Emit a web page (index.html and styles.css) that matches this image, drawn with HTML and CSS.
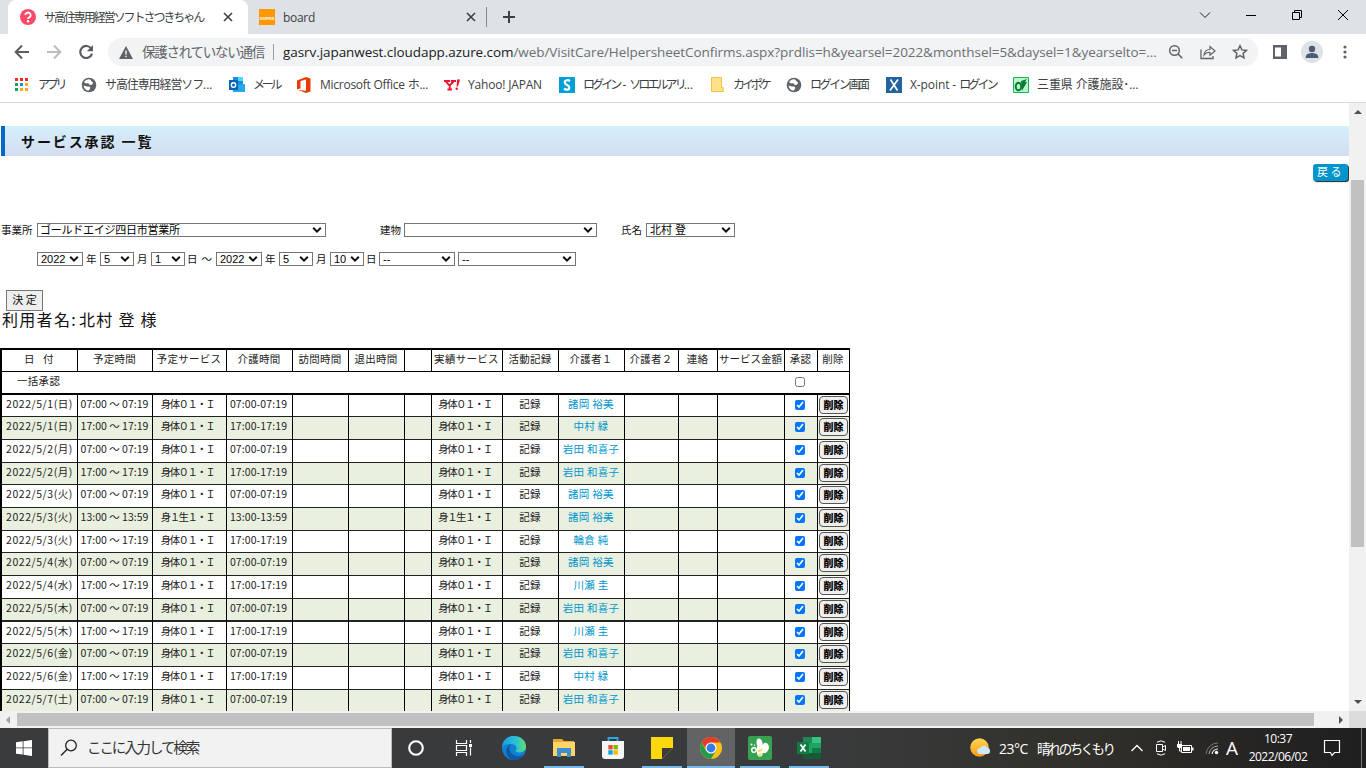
FILE: index.html
```html
<!DOCTYPE html>
<html lang="ja">
<head>
<meta charset="utf-8">
<title>サ高住専用経営ソフトさつきちゃん</title>
<link rel="stylesheet" href="styles.css">
</head>
<body>
<svg class="defs" width="0" height="0">
  <symbol id="chev" viewBox="0 0 10 8"><path d="M1.2 1.8 5 5.6 8.8 1.8" fill="none" stroke="#111" stroke-width="2"/></symbol>
  <symbol id="globe" viewBox="0 0 16 16"><circle cx="8" cy="8" r="7.3" fill="#5f6368"/><path d="M8.5 2.2C6.5 2 4 3.2 3 5.2l2.3 1.3 1.8-.4L8.8 8l2.2-.2 1.2-2.3-1.6-.9-1-1.6zM2.6 8.4l3.2 1.2 2.4-.2 1.2 1.4-1.4 2.8C5.200 13.800 2.800 11.200 2.600 8.400z" fill="#fff"/></symbol>
  <symbol id="x" viewBox="0 0 10 10"><path d="M1 1l8 8M9 1l-8 8" stroke="#3c4043" stroke-width="1.6"/></symbol>
</svg>
<header class="tabs">
  <div class="tab active">
    <svg width="16" height="16" viewBox="0 0 16 16"><circle cx="8" cy="8" r="8" fill="#fb4a68"/><path d="M5.300 6.100a2.700 2.500 0 1 1 4.300 2c-1.100.8-1.600 1-1.600 1.800" fill="none" stroke="#fff" stroke-width="1.900"/><circle cx="8" cy="12.300" r="1.200" fill="#fff"/></svg>
    <span class="tab-title jp1">サ高住専用経営ソフトさつきちゃん</span>
    <svg class="close" width="10" height="10"><use href="#x"/></svg>
  </div>
  <div class="tab second">
    <span class="norma">norma</span>
    <span class="tab-title board">board</span>
    <svg class="close" width="10" height="10"><use href="#x"/></svg>
  </div>
  <svg class="plus" width="12" height="12" viewBox="0 0 12 12"><path d="M6 0v12M0 6h12" stroke="#3c4043" stroke-width="2"/></svg>
  <div class="winbtns">
    <svg width="12" height="12" viewBox="0 0 12 12"><path d="M1 3.500l5 5 5-5" fill="none" stroke="#222"/></svg>
    <svg width="12" height="12" viewBox="0 0 12 12"><path d="M1 6.500h10" stroke="#000"/></svg>
    <svg width="12" height="12" viewBox="0 0 12 12"><path d="M1.500 3.500h7v7h-7zM3.500 3.500v-2h7v7h-2" fill="none" stroke="#000"/></svg>
    <svg width="12" height="12" viewBox="0 0 12 12"><path d="M1 1l10 10M11 1L1 11" stroke="#000"/></svg>
  </div>
</header>
<nav class="toolbar">
  <svg class="nav-ic" width="16" height="16" viewBox="0 0 16 16"><path d="M15 8H2M8 1.500L1.700 8 8 14.500" fill="none" stroke="#5a5d61" stroke-width="2"/></svg>
  <svg class="nav-ic" width="16" height="16" viewBox="0 0 16 16"><path d="M1 8h13M8 1.500L14.300 8 8 14.500" fill="none" stroke="#babcbe" stroke-width="2"/></svg>
  <svg class="nav-ic" width="16" height="16" viewBox="0 0 16 16"><path d="M13.200 4.600A6 6 0 1 0 14 9.600" fill="none" stroke="#5a5d61" stroke-width="2.200"/><path d="M15 1v6.200H8.800z" fill="#5a5d61"/></svg>
  <div class="omni">
    <svg class="warn" width="14" height="13" viewBox="0 0 14 13"><path d="M7 0l7 13H0z" fill="#5f6368"/><path d="M7 4.500v4M7 9.800v1.500" stroke="#f1f3f4" stroke-width="1.500"/></svg>
    <span class="insecure">保護されていない通信</span><i class="sep"></i>
    <span class="url"><b>gasrv.japanwest.cloudapp.azure.com</b>/web/VisitCare/HelpersheetConfirms.aspx?prdlis=h&amp;yearsel=2022&amp;monthsel=5&amp;daysel=1&amp;yearselto=...</span>
    <svg class="oic" width="16" height="16" viewBox="0 0 16 16"><circle cx="6.500" cy="6.500" r="4.800" fill="none" stroke="#5f6368" stroke-width="1.500"/><path d="M4 6.500h5M10 10l4.300 4.300" stroke="#5f6368" stroke-width="1.600"/></svg>
    <svg class="oic" width="16" height="16" viewBox="0 0 16 16"><path d="M1 5.500v9h12V12" fill="none" stroke="#5f6368" stroke-width="1.300"/><path d="M4 11c.5-4 3-5.500 6-5.500V2.500L15 7l-5 4.300V8.500C7.500 8.300 5.500 9 4 11z" fill="none" stroke="#5f6368" stroke-width="1.200"/></svg>
    <svg class="oic" width="16" height="16" viewBox="0 0 16 16"><path d="M8 1.800l1.900 4.100 4.500.5-3.300 3 .9 4.400L8 11.600l-4 2.200.9-4.400-3.300-3 4.500-.5z" fill="none" stroke="#5f6368" stroke-width="1.500"/></svg>
  </div>
  <svg class="panel" width="14" height="14" viewBox="0 0 14 14"><path d="M0 0h14v14H0z" fill="#5f6368"/><path d="M2 2.500h6v9H2z" fill="#fff"/></svg>
  <svg class="avatar" width="22" height="22" viewBox="0 0 22 22"><circle cx="11" cy="11" r="11" fill="#dee1e6"/><circle cx="11" cy="8" r="3.200" fill="#4c5c78"/><path d="M4.800 17v-1.500c0-2.500 4-3.500 6.200-3.500s6.200 1 6.200 3.500V17z" fill="#4c5c78"/></svg>
  <svg class="dots" width="4" height="14" viewBox="0 0 4 14"><g fill="#5f6368"><circle cx="2" cy="2" r="1.600"/><circle cx="2" cy="7" r="1.600"/><circle cx="2" cy="12" r="1.600"/></g></svg>
</nav>
<nav class="marks">
  <div class="mk m1"><svg width="14" height="14" viewBox="0 0 14 14"><path d="M0 0h3v3H0zM5 0h3v3H5zM10 0h3v3h-3z" fill="#f02a1d"/><path d="M0 5h3v3H0z" fill="#12a05c"/><path d="M5 5h3v3H5z" fill="#1a8cff"/><path d="M10 5h3v3h-3zM10 10h3v3h-3zM5 10h3v3H5z" fill="#f8a91c"/><path d="M0 10h3v3H0z" fill="#12a05c"/></svg><span>アプリ</span></div>
  <div class="mk m2"><svg width="16" height="16"><use href="#globe"/></svg><span>サ高住専用経営ソフ<em>...</em></span></div>
  <div class="mk m3"><svg width="16" height="16" viewBox="0 0 16 16"><path d="M4 0h10v8H4z" fill="#1490df"/><path d="M9 0h5v4H9z" fill="#50d9ff"/><path d="M3 8l13-1v8H4z" fill="#28a8ea"/><path d="M0 3h9v10H0z" fill="#0364b8"/><circle cx="4.500" cy="8" r="2.200" fill="none" stroke="#fff" stroke-width="1.400"/></svg><span>メール</span></div>
  <div class="mk m4"><svg width="14" height="16" viewBox="0 0 14 16"><path d="M0 3.500L9 0l4.500 1.500v13L9 16 1 13l8 .8V2.600L3.500 4v7.200L0 12.500z" fill="#eb3c00"/></svg><span>Microsoft Office ホ...</span></div>
  <div class="mk m5"><svg width="16" height="14" viewBox="0 0 16 14"><path d="M0 3h6M6.800 3H12M1.500 3l4 4.700L10 3M5.700 7.500v4M3.500 11.500h4.500" fill="none" stroke="#f0132d" stroke-width="1.900"/><path d="M13 1.500h3L14 8.500h-1.400z" fill="#f0132d"/><circle cx="12.700" cy="10.800" r="1.200" fill="#f0132d"/></svg><span>Yahoo! JAPAN</span></div>
  <div class="mk m6"><svg width="16" height="16" viewBox="0 0 16 16"><path d="M0 0h16v16H0z" fill="#009fd6"/><path d="M11 4.200C9 2.500 5.800 3 5.800 5.400c0 2.800 4.500 2.200 4.500 5 0 2.600-3.400 2.800-5.300 1.300" fill="none" stroke="#fff" stroke-width="2.200"/></svg><span>ログイン<em> - </em>ソロエルアリ<em>...</em></span></div>
  <div class="mk m7"><svg width="13" height="15" viewBox="0 0 13 15"><path d="M.5.500h10v10h1.700v4H.5z" fill="#ffe28a" stroke="#f2c240"/></svg><span>カイポケ</span></div>
  <div class="mk m8"><svg width="16" height="16"><use href="#globe"/></svg><span>ログイン画面</span></div>
  <div class="mk m9"><svg width="16" height="16" viewBox="0 0 16 16"><path d="M0 0h16v16H0z" fill="#25639f"/><path d="M4.500 2.500l7 11M12 2.500l-8 11" stroke="#fff" stroke-width="1.700"/></svg><span><em>X-point - </em>ログイン</span></div>
  <div class="mk m10"><svg width="16" height="16" viewBox="0 0 16 16"><path d="M.5.500h15v15H.5z" fill="#b9f7ca" stroke="#12b458"/><ellipse cx="5.500" cy="9.500" rx="2.800" ry="3.800" fill="none" stroke="#087b38" stroke-width="2"/><path d="M8 4l6-2-2 3 2 0-4 7-1 2z" fill="#087b38"/></svg><span>三重県 介護施設･...</span></div>
</nav>
<main class="view">
  <section class="page">
    <h1>サービス承認 一覧</h1>
    <div class="backrow"><a class="back">戻 る</a></div>
    <div class="filter f1">
      <label class="w36">事業所</label><div class="sel s289"><span class="office">ゴールドエイジ四日市営業所</span><svg width="10" height="8"><use href="#chev"/></svg></div>
      <label class="bld">建物</label><div class="sel s193"><span></span><svg width="10" height="8"><use href="#chev"/></svg></div>
      <label class="nm">氏名</label><div class="sel s89"><span class="kita">北村 登</span><svg width="10" height="8"><use href="#chev"/></svg></div>
    </div>
    <div class="filter f2">
      <div class="sel s46"><span>2022</span><svg width="10" height="8"><use href="#chev"/></svg></div><label class="w17">年</label>
      <div class="sel s34"><span>5</span><svg width="10" height="8"><use href="#chev"/></svg></div><label class="w17">月</label>
      <div class="sel s34"><span>1</span><svg width="10" height="8"><use href="#chev"/></svg></div><label class="w31">日 ～</label>
      <div class="sel s46"><span>2022</span><svg width="10" height="8"><use href="#chev"/></svg></div><label class="w17">年</label>
      <div class="sel s34"><span>5</span><svg width="10" height="8"><use href="#chev"/></svg></div><label class="w17">月</label>
      <div class="sel s34"><span>10</span><svg width="10" height="8"><use href="#chev"/></svg></div><label class="w15">日</label>
      <div class="sel s76"><span>--</span><svg width="10" height="8"><use href="#chev"/></svg></div>
      <div class="sel s118"><span>--</span><svg width="10" height="8"><use href="#chev"/></svg></div>
    </div>
    <button class="decide">決 定</button>
    <p class="user"><span>利用者名:</span><span>北村 登 様</span></p>
    <table>
      <colgroup><col class="c76"><col class="c75"><col class="c74"><col class="c66"><col class="c56"><col class="c56"><col class="c27"><col class="c71"><col class="c56"><col class="c66"><col class="c54"><col class="c39"><col class="c67"><col class="c33"><col class="c32"></colgroup>
      <thead>
        <tr><th>日&ensp; 付</th><th>予定時間</th><th>予定サービス</th><th>介護時間</th><th>訪問時間</th><th>退出時間</th><th></th><th>実績サービス</th><th>活動記録</th><th>介護者１</th><th>介護者２</th><th>連絡</th><th class="money">サービス金額</th><th>承認</th><th>削除</th></tr>
        <tr class="bulk"><td colspan="13">一括承認</td><td class="ck"><input type="checkbox"></td><td></td></tr>
      </thead>
      <tbody>
        <tr class="short"><td class="d">2022/5/1(日)</td><td class="t">07:00 ～ 07:19</td><td>身体０１・Ｉ</td><td class="r">07:00-07:19</td><td></td><td></td><td></td><td>身体０１・Ｉ</td><td>記録</td><td><a>諸岡 裕美</a></td><td></td><td></td><td></td><td class="ck"><input type="checkbox" checked></td><td><button>削除</button></td></tr>
        <tr><td class="d">2022/5/1(日)</td><td class="t">17:00 ～ 17:19</td><td>身体０１・Ｉ</td><td class="r">17:00-17:19</td><td></td><td></td><td></td><td>身体０１・Ｉ</td><td>記録</td><td><a>中村 緑</a></td><td></td><td></td><td></td><td class="ck"><input type="checkbox" checked></td><td><button>削除</button></td></tr>
        <tr><td class="d">2022/5/2(月)</td><td class="t">07:00 ～ 07:19</td><td>身体０１・Ｉ</td><td class="r">07:00-07:19</td><td></td><td></td><td></td><td>身体０１・Ｉ</td><td>記録</td><td><a>岩田 和喜子</a></td><td></td><td></td><td></td><td class="ck"><input type="checkbox" checked></td><td><button>削除</button></td></tr>
        <tr class="short"><td class="d">2022/5/2(月)</td><td class="t">17:00 ～ 17:19</td><td>身体０１・Ｉ</td><td class="r">17:00-17:19</td><td></td><td></td><td></td><td>身体０１・Ｉ</td><td>記録</td><td><a>岩田 和喜子</a></td><td></td><td></td><td></td><td class="ck"><input type="checkbox" checked></td><td><button>削除</button></td></tr>
        <tr><td class="d">2022/5/3(火)</td><td class="t">07:00 ～ 07:19</td><td>身体０１・Ｉ</td><td class="r">07:00-07:19</td><td></td><td></td><td></td><td>身体０１・Ｉ</td><td>記録</td><td><a>諸岡 裕美</a></td><td></td><td></td><td></td><td class="ck"><input type="checkbox" checked></td><td><button>削除</button></td></tr>
        <tr><td class="d">2022/5/3(火)</td><td class="t">13:00 ～ 13:59</td><td>身１生１・Ｉ</td><td class="r">13:00-13:59</td><td></td><td></td><td></td><td>身１生１・Ｉ</td><td>記録</td><td><a>諸岡 裕美</a></td><td></td><td></td><td></td><td class="ck"><input type="checkbox" checked></td><td><button>削除</button></td></tr>
        <tr class="short"><td class="d">2022/5/3(火)</td><td class="t">17:00 ～ 17:19</td><td>身体０１・Ｉ</td><td class="r">17:00-17:19</td><td></td><td></td><td></td><td>身体０１・Ｉ</td><td>記録</td><td><a>輪倉 純</a></td><td></td><td></td><td></td><td class="ck"><input type="checkbox" checked></td><td><button>削除</button></td></tr>
        <tr><td class="d">2022/5/4(水)</td><td class="t">07:00 ～ 07:19</td><td>身体０１・Ｉ</td><td class="r">07:00-07:19</td><td></td><td></td><td></td><td>身体０１・Ｉ</td><td>記録</td><td><a>諸岡 裕美</a></td><td></td><td></td><td></td><td class="ck"><input type="checkbox" checked></td><td><button>削除</button></td></tr>
        <tr><td class="d">2022/5/4(水)</td><td class="t">17:00 ～ 17:19</td><td>身体０１・Ｉ</td><td class="r">17:00-17:19</td><td></td><td></td><td></td><td>身体０１・Ｉ</td><td>記録</td><td><a>川瀬 圭</a></td><td></td><td></td><td></td><td class="ck"><input type="checkbox" checked></td><td><button>削除</button></td></tr>
        <tr class="thick"><td class="d">2022/5/5(木)</td><td class="t">07:00 ～ 07:19</td><td>身体０１・Ｉ</td><td class="r">07:00-07:19</td><td></td><td></td><td></td><td>身体０１・Ｉ</td><td>記録</td><td><a>岩田 和喜子</a></td><td></td><td></td><td></td><td class="ck"><input type="checkbox" checked></td><td><button>削除</button></td></tr>
        <tr class="short"><td class="d">2022/5/5(木)</td><td class="t">17:00 ～ 17:19</td><td>身体０１・Ｉ</td><td class="r">17:00-17:19</td><td></td><td></td><td></td><td>身体０１・Ｉ</td><td>記録</td><td><a>川瀬 圭</a></td><td></td><td></td><td></td><td class="ck"><input type="checkbox" checked></td><td><button>削除</button></td></tr>
        <tr><td class="d">2022/5/6(金)</td><td class="t">07:00 ～ 07:19</td><td>身体０１・Ｉ</td><td class="r">07:00-07:19</td><td></td><td></td><td></td><td>身体０１・Ｉ</td><td>記録</td><td><a>岩田 和喜子</a></td><td></td><td></td><td></td><td class="ck"><input type="checkbox" checked></td><td><button>削除</button></td></tr>
        <tr><td class="d">2022/5/6(金)</td><td class="t">17:00 ～ 17:19</td><td>身体０１・Ｉ</td><td class="r">17:00-17:19</td><td></td><td></td><td></td><td>身体０１・Ｉ</td><td>記録</td><td><a>中村 緑</a></td><td></td><td></td><td></td><td class="ck"><input type="checkbox" checked></td><td><button>削除</button></td></tr>
        <tr><td class="d">2022/5/7(土)</td><td class="t">07:00 ～ 07:19</td><td>身体０１・Ｉ</td><td class="r">07:00-07:19</td><td></td><td></td><td></td><td>身体０１・Ｉ</td><td>記録</td><td><a>岩田 和喜子</a></td><td></td><td></td><td></td><td class="ck"><input type="checkbox" checked></td><td><button>削除</button></td></tr>
      </tbody>
    </table>
  </section>
  <aside class="vbar"><svg width="8" height="4" viewBox="0 0 8 4"><path d="M4 0l4 4H0z" fill="#505050"/></svg><i></i><svg class="down" width="8" height="4" viewBox="0 0 8 4"><path d="M0 0h8L4 4z" fill="#505050"/></svg></aside>
  <div class="hbar"><svg width="4" height="8" viewBox="0 0 4 8"><path d="M4 0v8L0 4z" fill="#a3a3a3"/></svg><i></i><svg class="right" width="4" height="8" viewBox="0 0 4 8"><path d="M0 0v8l4-4z" fill="#505050"/></svg></div>
  <div class="corner"></div>
</main>
<footer class="taskbar">
  <div class="start"><svg width="16" height="16" viewBox="0 0 16 16"><path d="M0 2.300L6.700 1.300v6.200H0zM7.500 1.200L16 0v7.500H7.500zM0 8.300h6.700v6.300L0 13.700zM7.500 8.300H16V16l-8.500-1.200z" fill="#fff"/></svg></div>
  <div class="search"><svg width="18" height="18" viewBox="0 0 18 18"><circle cx="11" cy="6.500" r="5.300" fill="none" stroke="#222" stroke-width="1.300"/><path d="M7.200 10.300L1 16.500" stroke="#222" stroke-width="1.400"/></svg><span>ここに入力して検索</span></div>
  <div class="app a48"><svg width="18" height="18" viewBox="0 0 18 18"><circle cx="9" cy="9" r="6.800" fill="none" stroke="#fff" stroke-width="2.100"/></svg></div>
  <div class="app a48"><svg width="18" height="18" viewBox="0 0 18 18"><path d="M1.500 1v3.500h10V1M1.500 17v-3.500h10V17M1.500 6.500h10v5h-10zM15.500 1v3M15.500 8.500v8" fill="none" stroke="#fff" stroke-width="1.200"/><path d="M14 5h3v3h-3z" fill="#fff"/></svg></div>
  <div class="app a52"><svg width="26" height="26" viewBox="0 0 26 26"><defs><linearGradient id="e1"><stop offset="0" stop-color="#1b9de2"/><stop offset=".6" stop-color="#2bc3d2"/><stop offset="1" stop-color="#62df68"/></linearGradient></defs><circle cx="13" cy="13" r="12" fill="#147fd0"/><path d="M1 12C2 4.500 7 1 13 1c7 0 12 5 12 10.500 0 4-3.500 6-7 6-3 0-4-1-3-2.500 1.500-2.500 0-5.500-4-6-4-.3-8 .5-10 3z" fill="url(#e1)"/><path d="M9.500 9.500c-2 3-1.500 9 4 11 3.500 1.300 7 .5 9.500-1-3 5-8 6-11 5.300C6 23.500 4 17 6 13c1-2 2-3 3.500-3.500z" fill="#0c59a4"/></svg></div>
  <div class="app a48 run"><svg width="24" height="22" viewBox="0 0 24 22"><path d="M1 2h9l2 2h10v15H1z" fill="#e7a72a"/><path d="M1 5h22v14H1z" fill="#ffd567"/><path d="M5 11h14v9h-4v-4H9v4H5z" fill="#3d8fd3"/></svg></div>
  <div class="app a49"><svg width="24" height="24" viewBox="0 0 24 24"><path d="M7.500 6V2h9v4" fill="none" stroke="#2ca8e8" stroke-width="1.800"/><path d="M1 5h22v15q0 3-3 3H4q-3 0-3-3z" fill="#f5f5f5"/><path d="M7.300 9h4.400v4.400H7.300z" fill="#f25022"/><path d="M12.500 9h4.400v4.400h-4.400z" fill="#7fba00"/><path d="M7.300 14.200h4.400v4.400H7.300z" fill="#00a4ef"/><path d="M12.500 14.200h4.400v4.400h-4.400z" fill="#ffb900"/></svg></div>
  <div class="app a50 run"><svg width="22" height="22" viewBox="0 0 22 22"><path d="M0 0h22v11L11 22H0z" fill="#ffd80c"/><path d="M11 22V11h11z" fill="#3b3b3b"/><path d="M0 0h22v11H11v11H0z" fill="#ffd80c"/></svg></div>
  <div class="app a48 active run"><svg width="22" height="22" viewBox="0 0 22 22"><circle cx="11" cy="11" r="11" fill="#fbc117"/><path d="M1.500 5.500A11 11 0 0 0 11 22l5-8.500-10 0z" fill="#269a4c"/><path d="M1.500 5.500A11 11 0 0 1 20.500 5.500H11L7 13z" fill="#e33b2e"/><circle cx="11" cy="11" r="5.500" fill="#fff"/><circle cx="11" cy="11" r="4.400" fill="#347ce8"/></svg></div>
  <div class="app a50 run"><svg width="24" height="24" viewBox="0 0 24 24"><rect width="24" height="24" rx="2" fill="#36a150"/><ellipse cx="11.500" cy="7.500" rx="3" ry="5" fill="#fff" transform="rotate(-12 11 7)"/><ellipse cx="17" cy="12" rx="3.800" ry="5.200" fill="#fff" transform="rotate(15 17 12)"/><path d="M9 10l4-1 3 4-2 7q-4 2-5-2z" fill="#fff"/><path d="M10 14l4.500-1-.5 2-4 1zM10 18l4-1-1 3q-2 1-3-2z" fill="#f0dc4e"/><circle cx="6" cy="14" r="2.300" fill="none" stroke="#fff" stroke-width="1.500"/><circle cx="3.500" cy="8.500" r="1" fill="#fff"/><circle cx="6.500" cy="9.300" r=".8" fill="#fff"/></svg></div>
  <div class="app a48 run"><svg width="24" height="22" viewBox="0 0 24 22"><path d="M6 0h18v22H6z" fill="#21a366"/><path d="M6 0h9v6H6z" fill="#1d8a55"/><path d="M15 0h9v6h-9z" fill="#33c481"/><path d="M15 11h9v5h-9z" fill="#107c41"/><path d="M6 16h18v6H6z" fill="#185c37"/><path d="M0 5h12v12H0z" fill="#107c41"/><path d="M3.500 7.500l5 7M8.500 7.500l-5 7" stroke="#fff" stroke-width="1.700"/></svg></div>
  <div class="tray">
    <svg class="sun" width="22" height="20" viewBox="0 0 22 20"><defs><linearGradient id="su" x2="0" y2="1"><stop stop-color="#ffd650"/><stop offset="1" stop-color="#f79a1a"/></linearGradient></defs><circle cx="9.500" cy="9.500" r="9.300" fill="url(#su)"/><path d="M10 16a3 3 0 0 1 .3-6 4 4 0 0 1 7-.2 3.200 3.200 0 0 1 .7 6.200z" fill="#cce8ff"/></svg>
    <span class="temp">23°C</span><span class="wx">晴れのちくもり</span>
    <svg class="up" width="12" height="8" viewBox="0 0 12 8"><path d="M.5 7L6 1.500 11.500 7" fill="none" stroke="#fff" stroke-width="1.300"/></svg>
    <svg class="cam" width="12" height="16" viewBox="0 0 12 16"><path d="M1.500 4.500h6v7h-6zM7.500 7l3-1.500v5l-3-1.500M2 2.200Q6-.5 10 2.200M2 13.800q4 2.700 8 0" fill="none" stroke="#fff"/></svg>
    <svg class="bat" width="17" height="14" viewBox="0 0 17 14"><path d="M4.500 4.500h10v7h-10z" fill="none" stroke="#fff"/><path d="M6 6h7v4H6zM15 6.500h1.500v3H15zM0 3h5v3q-2.500 2.500-5 0zM1 0h1v3H1zM3.500 0h1v3h-1z" fill="#fff"/><path d="M2.500 6v4h2" fill="none" stroke="#fff"/></svg>
    <svg class="wifi" width="14" height="14" viewBox="0 0 14 14"><g fill="none"><path d="M1 13A12 12 0 0 1 13 2" stroke="#777"/><path d="M4 13A9 9 0 0 1 13 5" stroke="#aaa"/><path d="M7 13A6 6 0 0 1 13 8" stroke="#fff" stroke-width="1.200"/></g><circle cx="11.500" cy="11.500" r="1.700" fill="#fff"/></svg>
    <span class="ime">A</span>
    <div class="clock"><span>10:37</span><span>2022/06/02</span></div>
    <svg class="note" width="18" height="18" viewBox="0 0 18 18"><path d="M1.500 1.500h15v12h-5L9 16.500 7.500 13.500h-6z" fill="none" stroke="#fff" stroke-width="1.200"/></svg>
    <i class="peek"></i>
  </div>
</footer>
</body>
</html>
```
FILE: styles.css
```css
* { box-sizing: border-box; }
html, body { margin: 0; width: 1366px; height: 768px; overflow: hidden; background: #fff; }
body { display: flex; flex-direction: column; font-family: "Open Sans", "Noto Sans CJK JP", sans-serif; font-size: 12px; color: #3c4043; }
svg { display: block; flex: none; }
.defs { display: none; }
span, label, a { white-space: nowrap; }

/* tab strip */
.tabs { height: 34px; background: #dee1e6; display: flex; align-items: center; padding-left: 8px; flex: none; }
.tab { height: 34px; display: flex; align-items: center; flex: none; }
.tab.active { width: 240px; background: #fff; border-radius: 8px 8px 0 0; padding-left: 12px; }
.tab-title { width: 176px; margin-left: 8px; }
.jp1 { letter-spacing: -2.050px; }
.close { margin-left: 3px; }
.second { width: 239px; padding-left: 11px; border-right: 1px solid #85888c; height: 20px; }
.norma { width: 16px; height: 16px; background: #ff9800; color: #fff; font: bold 5px/18px "Liberation Sans", sans-serif; text-align: center; letter-spacing: -.2px; }
.board { width: 180px; letter-spacing: -.3px; }
.plus { margin-left: 16px; }
.winbtns { display: flex; margin-left: auto; gap: 34px; padding: 0 17px 5px 0; }

/* toolbar */
.toolbar { height: 34px; display: flex; align-items: center; padding: 2px 0 0 14px; flex: none; }
.nav-ic { margin-right: 16px; }
.omni { width: 1150px; height: 28px; margin-left: -2px; border-radius: 14px; background: #f1f3f4; display: flex; align-items: center; padding-left: 11px; flex: none; }
.insecure { width: 131px; flex: none; margin-left: 9px; font-size: 13.500px; letter-spacing: -1.250px; line-height: 18px; color: #5f6368; }
.sep { width: 1px; height: 16px; background: #9a9da1; flex: none; }
.url { width: 885px; flex: none; margin-left: 9px; font-size: 13.500px; color: #6b6f73; letter-spacing: -.068px; }
.url b { font-weight: 400; color: #202124; }
.oic { margin-right: 16px; }
.panel { margin-left: 15px; }
.avatar { margin-left: 14px; }
.dots { margin-left: 20px; }

/* bookmarks */
.marks { height: 35px; border-bottom: 1px solid #d8d9da; display: flex; align-items: center; padding: 0 0 1px 15px; flex: none; line-height: 16px; }
.mk { display: flex; align-items: center; gap: 8px; flex: none; }
.mk em { font-style: normal; letter-spacing: -.1px; }
.m1 { width: 66px; gap: 9px; letter-spacing: -3.200px; }
.m2 { width: 148px; letter-spacing: -1.100px; }
.m3 { width: 68px; letter-spacing: -3.200px; }
.m4 { width: 147px; gap: 9px; letter-spacing: -.26px; }
.m5 { width: 115px; letter-spacing: -.18px; }
.m6 { width: 152px; letter-spacing: -2.900px; }
.m7 { width: 75px; gap: 9px; letter-spacing: -3.100px; }
.m8 { width: 100px; letter-spacing: -2.400px; }
.m9 { width: 127px; letter-spacing: -2.800px; }
.m10 { letter-spacing: -.1px; }

/* viewport with scrollbars */
.view { display: grid; grid-template: 608px 17px / 1349px 17px; flex: none; }
.page { overflow: hidden; padding-top: 23px; font-family: "Noto Sans CJK JP", sans-serif; color: #111; }
h1 { margin: 0 0 0 1px; height: 30px; border-left: 4px solid #0068c8; padding-left: 16px; background: linear-gradient(#d4effc, #d4ddf0); font-size: 14px; line-height: 30px; letter-spacing: 1.900px; }
.backrow { display: flex; justify-content: flex-end; padding: 8px 1px 0 0; height: 67px; }
.back { width: 35px; height: 17px; border-radius: 3px; background: #0095cd; box-shadow: 1px 1px 1px #222; color: #fff; font-size: 11px; line-height: 15px; padding-left: 4px; }
.filter { display: flex; height: 14px; align-items: center; font-size: 10.500px; line-height: 14px; }
.sel { height: 14px; border: 1px solid #767676; background: #fff; display: flex; align-items: center; justify-content: space-between; padding: 0 3px; font: 11px/12px "Liberation Sans", "Noto Sans CJK JP", sans-serif; color: #000; flex: none; }
label { flex: none; }
.w36 { width: 37px; padding-left: 1px; }
.s289 { width: 289px; } .s193 { width: 193px; } .s89 { width: 89px; }
.s46 { width: 46px; } .s34 { width: 34px; } .s76 { width: 76px; } .s118 { width: 118px; margin-left: 3px; }
.office { letter-spacing: -.25px; margin-left: -1px; }
.bld { margin-left: 54px; width: 24px; }
.nm { margin-left: 24px; width: 25px; }
.f2 { margin: 15px 0 0 37px; }
.w17 { width: 17px; padding-left: 3px; }
.w31 { width: 31px; padding-left: 2px; letter-spacing: .8px; }
.w15 { width: 15px; padding-left: 2px; }
.decide { display: block; margin: 24px 0 0 6px; width: 37px; height: 21px; border: 1px solid #767676; background: #efefef; padding: 0 0 3px; font: 11px/16px "Noto Sans CJK JP", sans-serif; color: #111; }
.user { margin: 0; height: 37px; padding-left: 2px; display: flex; gap: 2px; font-size: 16px; line-height: 17px; letter-spacing: 1.300px; }

/* schedule table */
table { width: 850px; table-layout: fixed; border-spacing: 0; border: solid #000; border-width: 2px 0 0 2px; font-size: 10.500px; color: #222; }
.c76 { width: 76px; } .c75 { width: 75px; } .c74 { width: 74px; } .c66 { width: 66px; } .c56 { width: 56px; }
.c27 { width: 27px; } .c71 { width: 71px; } .c54 { width: 54px; } .c39 { width: 39px; } .c67 { width: 67px; }
.c33 { width: 33px; } .c32 { width: 32px; }
tr { height: 23px; }
th, td { padding: 0 1px 0 0; border: solid #000; border-width: 0 1px 1px 0; text-align: center; vertical-align: top; font-weight: 400; line-height: 17px; white-space: nowrap; letter-spacing: .3px; }
thead tr:first-child, .short { height: 22px; }
th.money { letter-spacing: 0; }
.bulk td { border-bottom-width: 2px; border-right: 0; }
.bulk td:first-child { text-align: left; padding-left: 15px; }
.bulk td:last-child { border-right: 1px solid #000; }
tbody td { border-bottom-color: #222; }
tbody tr:nth-child(even) { background: #eaf0df; }
.thick td { border-bottom-width: 2px; }
td:nth-child(3), td:nth-child(8) { letter-spacing: -1.600px; padding-right: 4px; }
.d { letter-spacing: .55px; padding: 0; }
.t { letter-spacing: .02px; }
.r { letter-spacing: .1px; padding-right: 2px; }
td a { color: #0095cd; letter-spacing: .3px; }
td.ck { padding: 5px 0 0; line-height: 0; text-align: center; }
.bulk td.ck { padding-right: 2px; }
input { width: 10px; height: 10px; margin: 0 2px 0 0; }
td button { display: block; width: 29px; height: 18px; margin: 1px 0 0 1px; padding: 0; border: 1px solid #555; border-radius: 4px; background: #efefef; font: 900 10px/16px "Noto Sans CJK JP", sans-serif; color: #000; }

/* scrollbars */
.vbar { background: #f1f1f1; display: flex; flex-direction: column; align-items: center; padding-top: 7px; }
.vbar i { width: 13px; height: 367px; margin: 66px 0 0 0; background: #c1c1c1; }
.vbar .down { margin-top: 153px; }
.hbar { background: #f1f1f1; display: flex; align-items: center; padding-left: 6px; }
.hbar i { width: 1297px; height: 13px; margin-left: 7px; background: #c1c1c1; }
.hbar .right { margin-left: 25px; }
.corner { background: #dcdcdc; }

/* taskbar */
.taskbar { height: 40px; display: flex; flex: none; color: #fff; background: linear-gradient(90deg, #3a3b3c 0, #393a3b 62%, #302f29 80%, #252423 92%, #201f1f 100%); }
.start { width: 48px; padding: 12px 0 0 16px; flex: none; }
.search { width: 344px; border: 1px solid #bdbdbd; background: #f2f2f2; display: flex; align-items: center; padding-left: 11px; flex: none; color: #333; font-size: 14.500px; letter-spacing: -2.100px; line-height: 18px; }
.search span { margin-left: 9px; }
.app { display: flex; align-items: center; justify-content: center; flex: none; }
.a48 { width: 48px; } .a49 { width: 49px; } .a50 { width: 50px; } .a52 { width: 52px; }
.run { background: linear-gradient(#76b9ed, #76b9ed) center bottom / 40px 2px no-repeat; }
.active { background-color: #626364; background-size: 48px 2px; }
.tray { display: flex; align-items: center; margin-left: auto; width: 396px; flex: none; }
.temp { width: 38px; margin-left: 7px; font-size: 14px; letter-spacing: -.5px; }
.wx { width: 94px; font-size: 13.500px; letter-spacing: -2.600px; }
.cam { margin-left: 12px; }
.bat { margin-left: 10px; }
.wifi { margin-left: 11px; }
.ime { width: 18px; margin-left: 7px; font-size: 19px; }
.clock { display: flex; flex-direction: column; width: 62px; margin-left: 3px; text-align: center; line-height: 18px; font-size: 12px; letter-spacing: -.5px; }
.note { margin-left: 14px; }
.peek { width: 1px; height: 40px; background: #777; margin-left: auto; margin-right: 4px; }
```
